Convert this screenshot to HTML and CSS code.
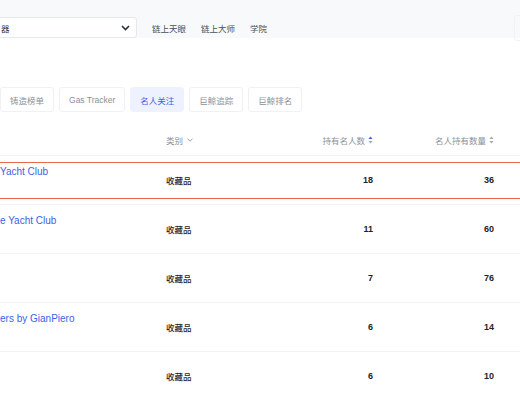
FILE: index.html
```html
<!DOCTYPE html>
<html lang="zh">
<head>
    <meta charset="UTF-8">
    <meta name="viewport" content="width=device-width, initial-scale=1.0">
    <title>名人关注</title>
    <link rel="stylesheet" href="styles.css">
</head>
<body>
    <header class="topbar">
        <div class="picker">
            <span>器</span>
            <svg class="picker-arrow" width="9" height="6" viewBox="0 0 9 6"><path d="M1 1l3.5 3.5L8 1" fill="none" stroke="#2b2f36" stroke-width="1.6"/></svg>
        </div>
        <nav class="topnav">
            <a>链上天眼</a>
            <a>链上大师</a>
            <a>学院</a>
        </nav>
        <div class="edge-btn"></div>
    </header>

    <main class="content">
        <!-- tabs -->
        <div class="tabs">
            <a class="tab">铸造榜单</a>
            <a class="tab">Gas Tracker</a>
            <a class="tab active">名人关注</a>
            <a class="tab">巨鲸追踪</a>
            <a class="tab">巨鲸排名</a>
        </div>

        <div class="table">
            <div class="row thead">
                <span></span>
                <span class="th">类别
                    <svg width="6" height="4" viewBox="0 0 6 4"><path d="M0.5 0.8L3 3.2 5.5 0.8" fill="none" stroke="#9a9fa8" stroke-width="1"/></svg>
                </span>
                <span class="th num">持有名人数
                    <svg width="5" height="8" viewBox="0 0 5 8"><path d="M2.5 0.5L4.6 3H0.4z" fill="#3c62e6"/><path d="M2.5 7.5L4.6 5H0.4z" fill="#a3a8b1"/></svg>
                </span>
                <span class="th num">名人持有数量
                    <svg width="5" height="8" viewBox="0 0 5 8"><path d="M2.5 0.5L4.6 3H0.4z" fill="#a3a8b1"/><path d="M2.5 7.5L4.6 5H0.4z" fill="#a3a8b1"/></svg>
                </span>
            </div>

            <div class="row flagged">
                <a class="name">Yacht Club</a>
                <span class="cat">收藏品</span>
                <span class="num">18</span>
                <span class="num">36</span>
            </div>
            <div class="row">
                <a class="name">e Yacht Club</a>
                <span class="cat">收藏品</span>
                <span class="num">11</span>
                <span class="num">60</span>
            </div>
            <div class="row">
                <a class="name"></a>
                <span class="cat">收藏品</span>
                <span class="num">7</span>
                <span class="num">76</span>
            </div>
            <div class="row">
                <a class="name">ers by GianPiero</a>
                <span class="cat">收藏品</span>
                <span class="num">6</span>
                <span class="num">14</span>
            </div>
            <div class="row">
                <a class="name"></a>
                <span class="cat">收藏品</span>
                <span class="num">6</span>
                <span class="num">10</span>
            </div>
        </div>
    </main>
</body>
</html>
```

FILE: styles.css
```css
body {
    margin: 0;
    font-family: "Liberation Sans", "Noto Sans CJK SC", sans-serif;
    background-color: white;
    color: #1f2329;
    overflow: hidden;
}
.topbar {
    display: flex;
    align-items: flex-end;
    height: 38px;
    background-color: #f8f9fb;
}
.picker {
    display: flex;
    align-items: center;
    justify-content: space-between;
    box-sizing: border-box;
    width: 139px;
    height: 21px;
    margin-left: -2px;
    padding: 0 6px 0 2px;
    background-color: white;
    border: 1px solid #e6e8ec;
    border-radius: 3px;
    font-size: 8.5px;
    color: #2b2f36;
}
.topnav {
    display: flex;
    gap: 15px;
    margin-left: 15px;
    align-self: center;
    margin-top: 17px;
}
.topnav a {
    font-size: 8.5px;
    color: #4a4f57;
    cursor: pointer;
}
.edge-btn {
    margin-left: auto;
    margin-right: -6px;
    align-self: center;
    margin-top: 17px;
    width: 10px;
    height: 24px;
    border: 1px solid #f1f2f4;
    border-radius: 3px;
}
.content {
    padding-top: 49px;
}
.tabs {
    display: flex;
    gap: 5px;
}
.tab {
    display: flex;
    align-items: center;
    height: 25px;
    padding: 0 9px;
    box-sizing: border-box;
    border: 1px solid #f0f1f4;
    border-radius: 3px;
    font-size: 8.5px;
    color: #8c9099;
    cursor: pointer;
}
.tab.active {
    background-color: #edf2fe;
    border-color: #edf2fe;
    color: #3c62e6;
}
.table {
    margin-top: 13px;
}
.row {
    position: relative;
    display: grid;
    grid-template-columns: 166px 80px 127px 121px;
    align-items: center;
    height: 48px;
    padding-right: 26px;
    border-bottom: 1px solid #f2f3f5;
    font-size: 9px;
    font-weight: 600;
}
.row.thead {
    height: 30px;
    font-size: 8.5px;
    font-weight: normal;
}
.th {
    display: flex;
    align-items: center;
    gap: 4px;
    color: #8b9099;
}
.th.num {
    justify-content: flex-end;
    gap: 3px;
}
.cat {
    font-size: 8.5px;
    font-weight: 500;
}
.num {
    text-align: right;
}
.name {
    align-self: start;
    padding-top: 10px;
    font-size: 10px;
    line-height: 12px;
    font-weight: normal;
    color: #3c62e6;
    white-space: nowrap;
    cursor: pointer;
}
.row.flagged::after {
    content: "";
    position: absolute;
    left: 0;
    right: 0;
    top: 6px;
    bottom: 5px;
    border-top: 1px solid #e8694f;
    border-bottom: 1px solid #e8694f;
}
```
